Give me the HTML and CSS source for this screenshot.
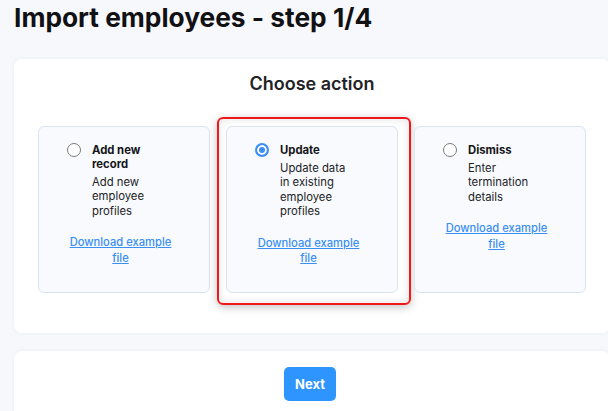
FILE: index.html
```html
<!DOCTYPE html>
<html lang="en">
<head>
<meta charset="utf-8">
<title>Import employees - step 1/4</title>
<link rel="stylesheet" href="styles.css">
</head>
<body>
<div class="page">
  <h1 class="title">Import employees - step 1/4</h1>
  <section class="card action-card">
    <h2 class="card-title">Choose action</h2>
    <div class="options">
      <div class="option">
        <label class="choice">
          <input class="radio" type="radio" name="action">
          <span class="choice-text">
            <span class="choice-name">Add new record</span>
            <span class="choice-desc">Add new employee profiles</span>
          </span>
        </label>
        <a class="download" href="#">Download example file</a>
      </div>
      <div class="option selected">
        <label class="choice">
          <input class="radio" type="radio" name="action" checked>
          <span class="choice-text">
            <span class="choice-name">Update</span>
            <span class="choice-desc">Update data in existing employee profiles</span>
          </span>
        </label>
        <a class="download" href="#">Download example file</a>
        <span class="highlight"></span>
      </div>
      <div class="option">
        <label class="choice">
          <input class="radio" type="radio" name="action">
          <span class="choice-text">
            <span class="choice-name">Dismiss</span>
            <span class="choice-desc">Enter termination details</span>
          </span>
        </label>
        <a class="download" href="#">Download example file</a>
      </div>
    </div>
  </section>
  <section class="card footer-card">
    <button class="next" type="button">Next</button>
  </section>
</div>
</body>
</html>
```

FILE: styles.css
```css
html {
  overflow: hidden;
}
body {
  margin: 0;
  padding: 0 0 0 14px;
  background: #f7f8fc;
  font-family: Inter, "Noto Sans", sans-serif;
  color: #1b1b1f;
}
.page {
  width: 596px;
}
.title {
  margin: 2px 0 26px;
  font-size: 26.3px;
  line-height: 31px;
  font-weight: 700;
  color: #111114;
}
.card {
  background: #fff;
  border-radius: 8px;
  box-shadow: 0 0 4px rgba(30, 40, 80, 0.05);
}
.action-card {
  padding: 14px 24px 40px;
}
.card-title {
  margin: 0 0 31px;
  text-align: center;
  font-size: 18px;
  line-height: 22px;
  font-weight: 600;
  color: #222226;
}
.options {
  display: grid;
  grid-template-columns: repeat(3, 1fr);
  gap: 16px;
}
.option {
  position: relative;
  display: flex;
  flex-direction: column;
  padding: 16px 35px 25px 28px;
  background: #f8fafd;
  border: 1px solid #dbe3f4;
  border-radius: 6px;
  box-sizing: border-box;
}
.choice {
  display: flex;
  align-items: flex-start;
  gap: 11px;
}
.radio {
  appearance: none;
  -webkit-appearance: none;
  flex: none;
  width: 14px;
  height: 14px;
  margin: 0;
  border: 1px solid #7a7a7a;
  border-radius: 50%;
  background: #fff;
  box-sizing: border-box;
}
.radio:checked {
  border: 2px solid #3d8ef4;
  background: #3d8ef4;
  box-shadow: inset 0 0 0 2px #fff;
}
.choice-text {
  display: flex;
  flex-direction: column;
  gap: 4px;
  width: 70px;
  font-size: 11.3px;
}
.choice-name {
  font-weight: 700;
  line-height: 14px;
  color: #141418;
}
.choice-desc {
  line-height: 14.4px;
  color: #222226;
}
.download {
  margin-top: 17px;
  text-align: center;
  font-size: 11.2px;
  line-height: 15.5px;
  font-weight: 500;
  color: #3a8ff2;
}
.highlight {
  position: absolute;
  left: -10px;
  top: -10px;
  right: -14px;
  bottom: -13px;
  border: 2px solid #f01818;
  border-radius: 6px;
  box-shadow: 0 2px 8px rgba(0, 0, 0, 0.25), inset 0 0 8px rgba(0, 0, 0, 0.12);
  pointer-events: none;
}
.footer-card {
  margin-top: 18px;
  padding: 16px 0 20px;
  display: flex;
  justify-content: center;
}
.next {
  width: 52px;
  height: 34px;
  margin-right: 4px;
  border: none;
  border-radius: 5px;
  background: #2e95ff;
  color: #fff;
  font-family: Inter, "Noto Sans", sans-serif;
  font-size: 13px;
  font-weight: 700;
}
```
